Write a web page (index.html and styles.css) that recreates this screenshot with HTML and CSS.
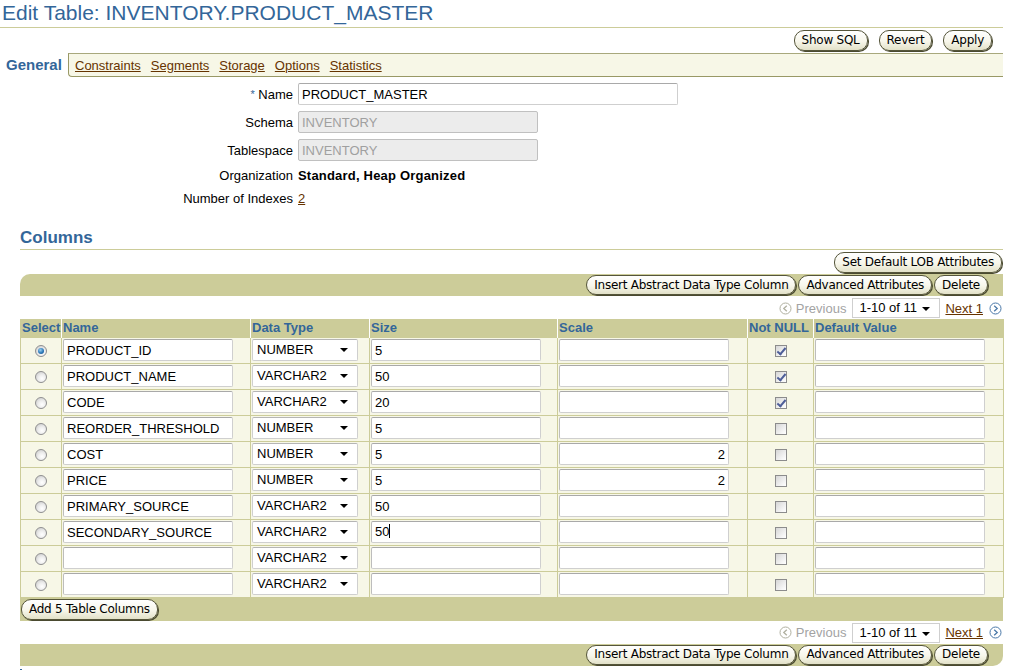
FILE: index.html
```html
<!DOCTYPE html>
<html>
<head>
<meta charset="utf-8">
<link rel="stylesheet" href="styles.css">
</head>
<body>
<div class="page-title">Edit Table: INVENTORY.PRODUCT_MASTER</div>
<div class="actions">
  <span class="btn">Show SQL</span>
  <span class="btn">Revert</span>
  <span class="btn">Apply</span>
</div>
<div class="tabbar">
  <div class="tab-active">General</div>
  <div class="tab-rest">
    <a class="link">Constraints</a>
    <a class="link">Segments</a>
    <a class="link">Storage</a>
    <a class="link">Options</a>
    <a class="link">Statistics</a>
  </div>
</div>

<div class="form">
  <div class="lbl"><span class="req">*</span> Name</div>
  <div><input class="txt wide" type="text" value="PRODUCT_MASTER"></div>
  <div class="lbl">Schema</div>
  <div><input class="txt mid disabled" type="text" value="INVENTORY" readonly></div>
  <div class="lbl">Tablespace</div>
  <div><input class="txt mid disabled" type="text" value="INVENTORY" readonly></div>
  <div class="lbl line">Organization</div>
  <div class="line bold">Standard, Heap Organized</div>
  <div class="lbl line">Number of Indexes</div>
  <div class="line"><a class="link">2</a></div>
</div>

<div class="content">
  <div class="section-head">Columns</div>
  <div class="lob-row"><span class="btn">Set Default LOB Attributes</span></div>
  <div class="bar bar-top">
    <span class="btn">Insert Abstract Data Type Column</span>
    <span class="btn">Advanced Attributes</span>
    <span class="btn">Delete</span>
  </div>
  <div class="pager pager-top">
    <svg class="nav-ico" width="13" height="13" viewBox="0 0 13 13"><circle cx="6.5" cy="6.5" r="5.5" fill="#fff" stroke="#b0b0a0" stroke-width="1"/><path d="M7.8 3.8 L4.8 6.5 L7.8 9.2" fill="none" stroke="#b0b0a0" stroke-width="1.3"/></svg>
    <span class="prev">Previous</span>
    <span class="pselect">1-10 of 11<span class="arrow"></span></span>
    <a class="link">Next 1</a>
    <svg class="nav-ico" width="13" height="13" viewBox="0 0 13 13"><circle cx="6.5" cy="6.5" r="5.5" fill="#fff" stroke="#4a78a8" stroke-width="1"/><path d="M5.2 3.8 L8.2 6.5 L5.2 9.2" fill="none" stroke="#4a78a8" stroke-width="1.3"/></svg>
  </div>

  <table class="grid">
    <colgroup>
      <col style="width:41px"><col style="width:189px"><col style="width:119px"><col style="width:188px"><col style="width:190px"><col style="width:66px"><col style="width:190px">
    </colgroup>
    <thead>
      <tr><th>Select</th><th>Name</th><th>Data Type</th><th>Size</th><th>Scale</th><th>Not NULL</th><th>Default Value</th></tr>
    </thead>
    <tbody>
      <tr><td class="c"><span class="radio on"></span></td><td><input class="txt cell" type="text" value="PRODUCT_ID"></td><td><span class="sel">NUMBER<span class="arrow"></span></span></td><td><input class="txt cell" type="text" value="5"></td><td><input class="txt cell" type="text" value=""></td><td class="c"><span class="chk on"></span></td><td><input class="txt cell" type="text" value=""></td></tr>
      <tr><td class="c"><span class="radio"></span></td><td><input class="txt cell" type="text" value="PRODUCT_NAME"></td><td><span class="sel">VARCHAR2<span class="arrow"></span></span></td><td><input class="txt cell" type="text" value="50"></td><td><input class="txt cell" type="text" value=""></td><td class="c"><span class="chk on"></span></td><td><input class="txt cell" type="text" value=""></td></tr>
      <tr><td class="c"><span class="radio"></span></td><td><input class="txt cell" type="text" value="CODE"></td><td><span class="sel">VARCHAR2<span class="arrow"></span></span></td><td><input class="txt cell" type="text" value="20"></td><td><input class="txt cell" type="text" value=""></td><td class="c"><span class="chk on"></span></td><td><input class="txt cell" type="text" value=""></td></tr>
      <tr><td class="c"><span class="radio"></span></td><td><input class="txt cell" type="text" value="REORDER_THRESHOLD"></td><td><span class="sel">NUMBER<span class="arrow"></span></span></td><td><input class="txt cell" type="text" value="5"></td><td><input class="txt cell" type="text" value=""></td><td class="c"><span class="chk"></span></td><td><input class="txt cell" type="text" value=""></td></tr>
      <tr><td class="c"><span class="radio"></span></td><td><input class="txt cell" type="text" value="COST"></td><td><span class="sel">NUMBER<span class="arrow"></span></span></td><td><input class="txt cell" type="text" value="5"></td><td><input class="txt cell right" type="text" value="2"></td><td class="c"><span class="chk"></span></td><td><input class="txt cell" type="text" value=""></td></tr>
      <tr><td class="c"><span class="radio"></span></td><td><input class="txt cell" type="text" value="PRICE"></td><td><span class="sel">NUMBER<span class="arrow"></span></span></td><td><input class="txt cell" type="text" value="5"></td><td><input class="txt cell right" type="text" value="2"></td><td class="c"><span class="chk"></span></td><td><input class="txt cell" type="text" value=""></td></tr>
      <tr><td class="c"><span class="radio"></span></td><td><input class="txt cell" type="text" value="PRIMARY_SOURCE"></td><td><span class="sel">VARCHAR2<span class="arrow"></span></span></td><td><input class="txt cell" type="text" value="50"></td><td><input class="txt cell" type="text" value=""></td><td class="c"><span class="chk"></span></td><td><input class="txt cell" type="text" value=""></td></tr>
      <tr><td class="c"><span class="radio"></span></td><td><input class="txt cell" type="text" value="SECONDARY_SOURCE"></td><td><span class="sel">VARCHAR2<span class="arrow"></span></span></td><td><span class="txt cell fake">50<span class="caret"></span></span></td><td><input class="txt cell" type="text" value=""></td><td class="c"><span class="chk"></span></td><td><input class="txt cell" type="text" value=""></td></tr>
      <tr><td class="c"><span class="radio"></span></td><td><input class="txt cell" type="text" value=""></td><td><span class="sel">VARCHAR2<span class="arrow"></span></span></td><td><input class="txt cell" type="text" value=""></td><td><input class="txt cell" type="text" value=""></td><td class="c"><span class="chk"></span></td><td><input class="txt cell" type="text" value=""></td></tr>
      <tr><td class="c"><span class="radio"></span></td><td><input class="txt cell" type="text" value=""></td><td><span class="sel">VARCHAR2<span class="arrow"></span></span></td><td><input class="txt cell" type="text" value=""></td><td><input class="txt cell" type="text" value=""></td><td class="c"><span class="chk"></span></td><td><input class="txt cell" type="text" value=""></td></tr>
    </tbody>
  </table>
  <div class="bar bar-foot">
    <span class="btn">Add 5 Table Columns</span>
  </div>
  <div class="pager pager-bottom">
    <svg class="nav-ico" width="13" height="13" viewBox="0 0 13 13"><circle cx="6.5" cy="6.5" r="5.5" fill="#fff" stroke="#b0b0a0" stroke-width="1"/><path d="M7.8 3.8 L4.8 6.5 L7.8 9.2" fill="none" stroke="#b0b0a0" stroke-width="1.3"/></svg>
    <span class="prev">Previous</span>
    <span class="pselect">1-10 of 11<span class="arrow"></span></span>
    <a class="link">Next 1</a>
    <svg class="nav-ico" width="13" height="13" viewBox="0 0 13 13"><circle cx="6.5" cy="6.5" r="5.5" fill="#fff" stroke="#4a78a8" stroke-width="1"/><path d="M5.2 3.8 L8.2 6.5 L5.2 9.2" fill="none" stroke="#4a78a8" stroke-width="1.3"/></svg>
  </div>
  <div class="bar bar-bottom">
    <span class="btn">Insert Abstract Data Type Column</span>
    <span class="btn">Advanced Attributes</span>
    <span class="btn">Delete</span>
  </div>
  <div class="tip"><span class="tip-ico"></span>TIP Select table column and then choose an action.</div>
</div>
</body>
</html>
```
FILE: styles.css
```css
* { box-sizing: border-box; }
html, body { margin: 0; padding: 0; background: #fff; }
body {
  font-family: "Liberation Sans", Arial, sans-serif;
  font-size: 13px;
  color: #000;
  overflow: hidden;
}
.page-title {
  font-size: 21px;
  line-height: 26px;
  height: 28px;
  color: #336699;
  padding-left: 2px;
  border-bottom: 1px solid #cccc99;
  margin-right: 6px;
}
.actions {
  display: flex;
  justify-content: flex-end;
  gap: 11px;
  padding: 2px 17px 2px 0;
}
.btn {
  display: inline-flex;
  align-items: center;
  height: 21px;
  padding: 0 7px 1px 7px;
  font-family: "DejaVu Sans", Verdana, sans-serif;
  font-size: 12px;
  letter-spacing: -0.25px;
  color: #000;
  white-space: nowrap;
  border: 1px solid #55553a;
  border-radius: 10px;
  background: linear-gradient(#ffffff, #f7f6ea 55%, #e2e1c8);
  box-shadow: 1px 1px 0 #4a4a30;
}
.tabbar {
  display: flex;
  height: 24px;
  margin-right: 6px;
}
.tab-active {
  width: 68px;
  padding-left: 6px;
  font-size: 15px;
  font-weight: bold;
  color: #336699;
  line-height: 24px;
  background: #fff;
}
.tab-rest {
  flex: 1;
  display: flex;
  align-items: center;
  gap: 10px;
  padding-left: 6px;
  background: #f7f7e7;
  border-top: 1px solid #a8a87c;
  border-bottom: 1px solid #999966;
  border-left: 1px solid #999966;
  border-bottom-left-radius: 4px;
}
.link {
  color: #663300;
  text-decoration: underline;
}
.form {
  display: grid;
  grid-template-columns: 293px auto;
  column-gap: 5px;
  row-gap: 6px;
  margin-top: 6px;
  align-items: center;
}
.lbl { text-align: right; }
.line { line-height: 17px; }
.bold { font-weight: bold; letter-spacing: 0.2px; }
.req { color: #336699; font-size: 11px; vertical-align: 1px; }
.txt {
  display: inline-block;
  height: 22px;
  font-family: "Liberation Sans", Arial, sans-serif;
  font-size: 13px;
  color: #000;
  padding: 0 3px;
  border: 1px solid #cfcfcf;
  border-top-color: #a9a9a9;
  border-left-color: #bdbdbd;
  border-radius: 2px;
  background: #fff;
  outline: none;
  vertical-align: middle;
}
.wide { width: 380px; }
.mid { width: 240px; }
.disabled {
  background: #ececec;
  color: #a0a0a0;
  border-color: #c0c0c0;
}
.content {
  margin: 0 6px 0 20px;
}
.section-head {
  margin-top: 20px;
  height: 23px;
  line-height: 22px;
  font-size: 17px;
  font-weight: bold;
  color: #336699;
  border-bottom: 1px solid #cccc99;
}
.lob-row {
  display: flex;
  justify-content: flex-end;
  padding: 2px 1px 1px 0;
}
.bar {
  display: flex;
  align-items: center;
  background: #cccc99;
}
.bar-top {
  height: 22px;
  justify-content: flex-end;
  gap: 2px;
  padding-right: 15px;
  border-top-left-radius: 10px;
}
.bar-top .btn, .bar-bottom .btn { height: 20px; }
.bar-foot {
  height: 23px;
  padding-left: 1px;
}
.bar-bottom {
  height: 22px;
  justify-content: flex-end;
  gap: 2px;
  padding-right: 15px;
  border-bottom-right-radius: 10px;
}
.pager {
  display: flex;
  justify-content: flex-end;
  align-items: center;
  height: 20px;
  padding-right: 1px;
}
.pager-top { margin: 2px 0 1px 0; }
.pager-bottom { margin: 2px 0 1px 0; }
.nav-ico { display: block; }
.prev { color: #a3a3a3; margin: 0 6px 0 4px; }
.pselect {
  position: relative;
  display: inline-block;
  width: 88px;
  height: 20px;
  line-height: 18px;
  padding-left: 6px;
  border: 1px solid #cfcfcf;
  background: #fff;
  margin-right: 5px;
}
.pager .link { margin-right: 6px; }
.arrow {
  position: absolute;
  right: 9px;
  top: 8px;
  width: 0;
  height: 0;
  border-left: 4px solid transparent;
  border-right: 4px solid transparent;
  border-top: 4px solid #000;
}
.grid {
  table-layout: fixed;
  width: 983px;
  border-collapse: collapse;
  border-spacing: 0;
}
.grid th {
  background: #cccc99;
  color: #336699;
  font-weight: bold;
  text-align: left;
  height: 18px;
  padding: 0 1px;
  border-left: 1px solid #fff;
  line-height: 17px;
  white-space: nowrap;
  overflow: hidden;
}
.grid th:first-child { border-left: 1px solid #cccc99; }
.grid td {
  background: #f7f7e7;
  border: 1px solid #cccc99;
  height: 26px;
  padding: 0 1px;
  vertical-align: middle;
}
.grid td.c { text-align: center; }
.cell { width: 170px; }
.right { text-align: right; }
.fake { line-height: 20px; }
.caret {
  display: inline-block;
  width: 1px;
  height: 14px;
  background: #000;
  vertical-align: -2px;
}
.sel {
  position: relative;
  display: inline-block;
  width: 106px;
  height: 22px;
  line-height: 20px;
  padding-left: 4px;
  border: 1px solid #cfcfcf;
  border-top-color: #b5b5b5;
  border-radius: 2px;
  background: #fff;
  vertical-align: middle;
}
.radio {
  display: inline-block;
  width: 12px;
  height: 12px;
  border-radius: 50%;
  border: 1px solid #909090;
  background: radial-gradient(circle at 60% 65%, #ffffff 0%, #eeeeee 40%, #c4c4c4 100%);
  vertical-align: middle;
  position: relative;
}
.radio.on::after {
  content: "";
  position: absolute;
  left: 2px; top: 2px;
  width: 6px; height: 6px;
  border-radius: 50%;
  background: radial-gradient(circle at 40% 35%, #9cd0f0 0%, #2a78b8 55%, #1a4a80 100%);
}
.chk {
  display: inline-block;
  width: 12px;
  height: 12px;
  border: 1px solid #8c8c8c;
  background: linear-gradient(135deg, #d6d6d6, #f4f4f4 70%, #ffffff);
  vertical-align: middle;
  position: relative;
}
.chk.on::after {
  content: "";
  position: absolute;
  left: 3px; top: 0px;
  width: 3px; height: 7px;
  border-right: 2px solid #4e5e98;
  border-bottom: 2px solid #4e5e98;
  transform: rotate(40deg);
}
.tip {
  color: #336699;
  font-size: 13px;
  line-height: 16px;
  margin-top: 1px;
  white-space: nowrap;
}
.tip-ico {
  display: inline-block;
  width: 12px;
  height: 10px;
  border-left: 2px solid #336699;
  margin-right: 3px;
}
```
